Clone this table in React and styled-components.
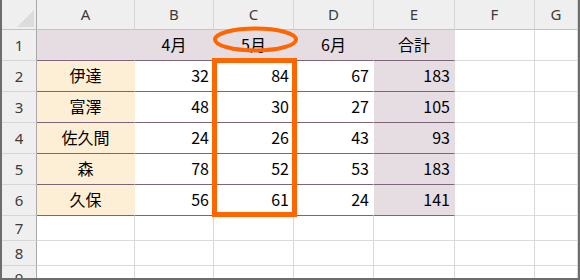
import React from 'react';
import styled, { createGlobalStyle } from 'styled-components';

const GlobalStyle = createGlobalStyle`
  body {
    margin: 0;
    background: #fff;
  }
`;

const Frame = styled.div`
  position: relative;
  width: 580px;
  height: 280px;
  box-sizing: border-box;
  border: 2px solid #6d6d6d;
  border-top: none;
  overflow: hidden;
  background: #fff;
`;

const Sheet = styled.div`
  display: grid;
  grid-template-columns: 35px 98px 79px 80px 80px 81px 80px 1fr;
  grid-template-rows: 30px repeat(6, 31px) 25px 25px 25px;
`;

const Corner = styled.div`
  position: relative;
  background: #efefef;
  border-right: 1px solid #a8a8a8;
  border-bottom: 1px solid #c4c4c4;

  &::after {
    content: '';
    position: absolute;
    right: 2px;
    bottom: 2px;
    width: 0;
    height: 0;
    border-left: 17px solid transparent;
    border-bottom: 17px solid #dcdcdc;
  }
`;

const ColHead = styled.div`
  display: flex;
  align-items: center;
  justify-content: center;
  background: #efefef;
  border-right: 1px solid #d6d6d6;
  border-bottom: 1px solid #c4c4c4;
  font-family: 'Noto Sans', 'Open Sans', sans-serif;
  font-size: 15px;
  color: #3c3c3c;
  padding-bottom: 1px;
`;

const RowHead = styled.div`
  display: flex;
  align-items: center;
  justify-content: center;
  background: #efefef;
  border-right: 1px solid #a8a8a8;
  border-bottom: 1px solid #d6d6d6;
  font-family: 'Noto Sans', 'Open Sans', sans-serif;
  font-size: 15px;
  color: #3c3c3c;
`;

const Cell = styled.div`
  display: flex;
  align-items: center;
  justify-content: ${(p) => (p.$align === 'right' ? 'flex-end' : 'center')};
  padding: 0 4px 3px;
  box-sizing: border-box;
  background: ${(p) => p.$bg || '#fff'};
  border-right: 1px solid ${(p) => (p.$inTable ? p.$bg || '#fff' : '#dadada')};
  border-bottom: 1px solid ${(p) => (p.$inTable ? '#7e6478' : '#dadada')};
  font-family: 'Noto Sans CJK JP', 'Noto Sans', sans-serif;
  font-size: 16px;
  color: #000;
  white-space: nowrap;
`;

const ColumnMark = styled.div`
  position: absolute;
  left: 210px;
  top: 58px;
  width: 85px;
  height: 159px;
  box-sizing: border-box;
  border: 5px solid #ff6600;
  pointer-events: none;
`;

const HeaderMark = styled.svg`
  position: absolute;
  left: 204px;
  top: 24px;
  width: 96px;
  height: 32px;
  pointer-events: none;
`;

const MAUVE = '#e6dde3';
const CREAM = '#fdefd6';

const rows = [
  ['', '4月', '5月', '6月', '合計'],
  ['伊達', 32, 84, 67, 183],
  ['富澤', 48, 30, 27, 105],
  ['佐久間', 24, 26, 43, 93],
  ['森', 78, 52, 53, 183],
  ['久保', 56, 61, 24, 141],
];

const letters = ['A', 'B', 'C', 'D', 'E', 'F', 'G'];

const cellBg = (r, c) => {
  if (r === 0) return MAUVE;
  if (c === 0) return CREAM;
  if (c === 4) return MAUVE;
  return '#fff';
};

const App = () => {
  return (
    <>
      <GlobalStyle />
      <Frame>
        <Sheet>
          <Corner />
          {letters.map((l) => (
            <ColHead key={l}>{l}</ColHead>
          ))}
          {rows.map((row, r) => (
            <React.Fragment key={r}>
              <RowHead>{r + 1}</RowHead>
              {row.map((v, c) => (
                <Cell
                  key={c}
                  $inTable
                  $bg={cellBg(r, c)}
                  $align={typeof v === 'number' ? 'right' : 'center'}
                >
                  {v}
                </Cell>
              ))}
              <Cell />
              <Cell />
            </React.Fragment>
          ))}
          {[7, 8, 9].map((n) => (
            <React.Fragment key={n}>
              <RowHead>{n}</RowHead>
              {letters.map((l) => (
                <Cell key={l} />
              ))}
            </React.Fragment>
          ))}
        </Sheet>
        <HeaderMark viewBox="0 0 96 32">
          <ellipse cx="49.5" cy="15.5" rx="40.5" ry="11" fill="none" stroke="#ff6600" strokeWidth="4" />
        </HeaderMark>
        <ColumnMark />
      </Frame>
    </>
  );
};

export default App;
